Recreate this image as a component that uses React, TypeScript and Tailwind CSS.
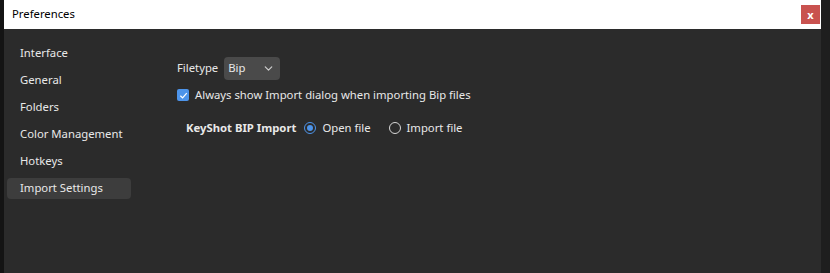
import { ChevronDown } from "lucide-react";

const menu = ["Interface", "General", "Folders", "Color Management", "Hotkeys", "Import Settings"];

const Radio = ({ on, label }: { on: boolean; label: string }) => (
  <label className="flex items-center gap-[6px]">
    <span
      className={
        "flex h-[12px] w-[12px] items-center justify-center rounded-full border-[1.5px] " +
        (on ? "border-[#4d94ea]" : "border-[#d8d8d8]")
      }
    >
      {on && <span className="h-[6px] w-[6px] rounded-full bg-[#4d94ea]" />}
    </span>
    <span>{label}</span>
  </label>
);

export default function App() {
  return (
    <div className="flex h-[273px] w-[830px] bg-[#161616] font-['Noto_Sans',sans-serif] text-[11.3px] text-[#e8e8e8]">
      <div className="w-[4px] bg-[#141414]" />
      <div className="flex w-[817px] flex-col bg-[#2b2b2b]">
        <div className="flex h-[29px] items-center justify-between bg-white pl-[8px] pr-[1px] text-black">
          <span>Preferences</span>
          <button className="flex h-[19px] w-[19px] items-center justify-center bg-[#c9524f] text-[11px] font-bold leading-none text-white">
            x
          </button>
        </div>
        <div className="flex flex-1">
          <ul className="flex w-[140px] flex-col gap-[6px] pl-[3px] pt-[14px]">
            {menu.map((m, i) => (
              <li
                key={m}
                className={
                  "flex h-[21px] w-[124px] items-center rounded-[4px] pl-[13px] " +
                  (i === menu.length - 1 ? "bg-[#3d3d3d]" : "")
                }
              >
                {m}
              </li>
            ))}
          </ul>
          <div className="flex flex-col pl-[33px] pt-[28px]">
            <div className="flex items-center gap-[6px]">
              <span>Filetype</span>
              <div className="flex h-[23px] w-[56px] items-center justify-between rounded-[4px] bg-[#4a4a4a] pl-[4px] pr-[5px]">
                <span>Bip</span>
                <ChevronDown size={13} strokeWidth={2.2} className="text-[#cfcfcf]" />
              </div>
            </div>
            <div className="mt-[7px] flex items-center gap-[6px]">
              <span className="flex h-[12px] w-[12px] items-center justify-center rounded-[2px] bg-[#4d94ea]">
                <svg width="9" height="9" viewBox="0 0 10 10" fill="none">
                  <path d="M1.5 5.2 L4 7.6 L8.6 2.4" stroke="white" strokeWidth="1.4" />
                </svg>
              </span>
              <span>Always show Import dialog when importing Bip files</span>
            </div>
            <div className="mt-[16px] flex items-center gap-[8px] pl-[9px]">
              <span className="font-bold">KeyShot BIP Import</span>
              <div className="flex items-center gap-[18px]">
                <Radio on label="Open file" />
                <Radio on={false} label="Import file" />
              </div>
            </div>
          </div>
        </div>
      </div>
      <div className="w-[9px] bg-[#1e1e1e]" />
    </div>
  );
}
